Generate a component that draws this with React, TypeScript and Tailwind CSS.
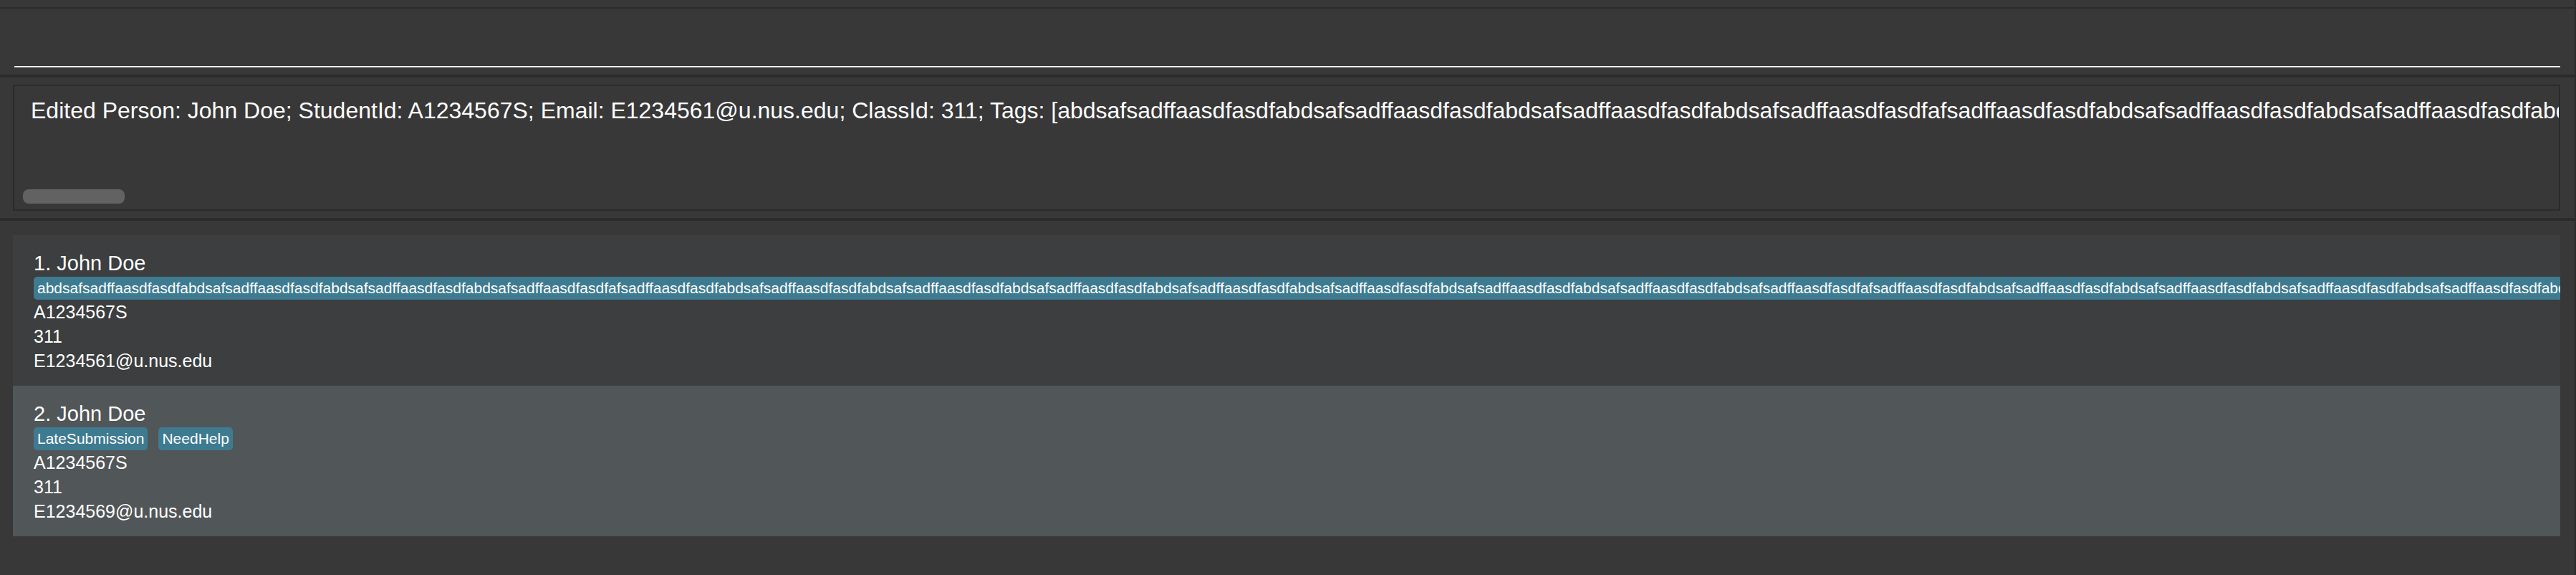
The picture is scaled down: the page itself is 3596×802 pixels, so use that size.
import React from "react";

const chunk = "abdsafsadffaasdfasdf";
const longTag =
  (chunk.repeat(3) + "abdsafsadffaasdfasdfafsadffaasdfasdf" + chunk.repeat(4)).repeat(4);

const editedMsg =
  "Edited Person: John Doe; StudentId: A1234567S; Email: E1234561@u.nus.edu; ClassId: 311; Tags: [" +
  longTag +
  "]";

type Person = {
  idx: number;
  name: string;
  tags: string[];
  studentId: string;
  classId: string;
  email: string;
};

const people: Person[] = [
  { idx: 1, name: "John Doe", tags: [longTag], studentId: "A1234567S", classId: "311", email: "E1234561@u.nus.edu" },
  { idx: 2, name: "John Doe", tags: ["LateSubmission", "NeedHelp"], studentId: "A1234567S", classId: "311", email: "E1234569@u.nus.edu" },
];

function PersonCard({ p }: { p: Person }) {
  const bg = p.idx % 2 === 1 ? "bg-[#3c3e3f]" : "bg-[#515658]";
  return (
    <div className={`${bg} h-[210px] pl-[29px] pt-[21px] overflow-hidden text-white`}>
      <div className="text-[29px] leading-[36px] whitespace-nowrap">
        {p.idx}. {p.name}
      </div>
      <div className="flex gap-[15px] mt-[1px] whitespace-nowrap">
        {p.tags.map((t, i) => (
          <span
            key={i}
            className="bg-[#3e7b91] text-white text-[21px] leading-[32px] h-[32px] px-[5px] rounded-[5px] shrink-0"
          >
            {t}
          </span>
        ))}
      </div>
      <div className="text-[25px] leading-[34px]">
        <div>{p.studentId}</div>
        <div>{p.classId}</div>
        <div>{p.email}</div>
      </div>
    </div>
  );
}

export default function App() {
  return (
    <div
      className="w-[3596px] h-[802px] bg-[#383838] border-r-2 border-[#2b2b2b] flex flex-col overflow-hidden"
      style={{ fontFamily: '"Liberation Sans", Arial, sans-serif' }}
    >
      {/* menu bar remnant */}
      <div className="h-[12px] shrink-0 border-b-2 border-[#2b2b2b]" />

      {/* command box */}
      <div className="h-[92px] shrink-0 pl-[20px] pr-[20px]">
        <div className="h-[82px] border-b-2 border-white" />
      </div>
      <div className="h-[4px] shrink-0 bg-[#2b2b2b]" />

      {/* result display */}
      <div className="h-[196px] shrink-0 pt-[10px] pl-[18px] pr-[20px]">
        <div className="h-[176px] border-2 border-[#2b2b2b] flex flex-col justify-between pt-[14px] pb-[8px] overflow-hidden">
          <div className="pl-[23px] text-white text-[32px] leading-[40px] whitespace-nowrap">
            {editedMsg}
          </div>
          <div className="ml-[12px] w-[142px] h-[20px] rounded-[8px] bg-[#626262]" />
        </div>
      </div>
      <div className="h-[4px] shrink-0 bg-[#2b2b2b]" />

      {/* person list */}
      <div className="flex-1 pt-[20px] pl-[18px] pr-[20px] flex flex-col">
        {people.map((p) => (
          <PersonCard key={p.idx} p={p} />
        ))}
      </div>
    </div>
  );
}
